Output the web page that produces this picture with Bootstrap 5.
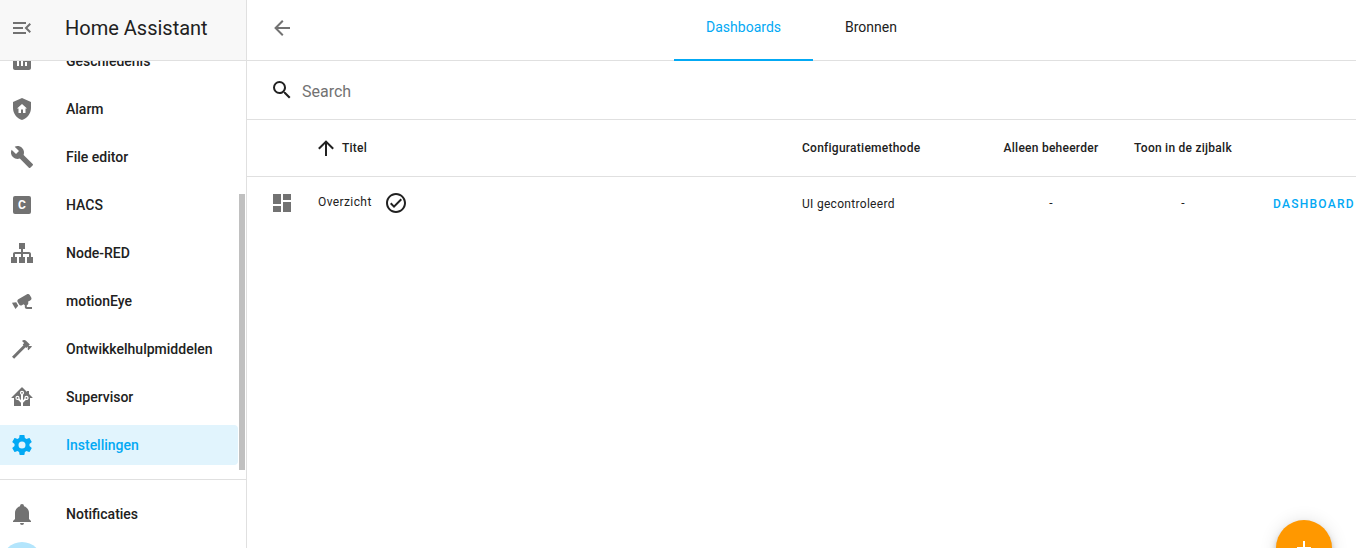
<!DOCTYPE html>
<html lang="nl">
<head>
  <meta charset="UTF-8">
  <meta name="viewport" content="width=device-width, initial-scale=1">
  <title>Dashboards</title>
  <link href="https://cdn.jsdelivr.net/npm/bootstrap@5.3.0/dist/css/bootstrap.min.css" rel="stylesheet">
  <script src="https://cdn.jsdelivr.net/npm/bootstrap@5.3.0/dist/js/bootstrap.bundle.min.js"></script>
  <style>
    html, body { height: 100%; overflow: hidden; }
    body { font-family: Roboto, "Liberation Sans", sans-serif; color: #212121; background: #fff; }
    svg { display: block; fill: currentColor; flex: none; }

    .shell { height: 548px; overflow: hidden; }
    .side { width: 247px; flex: none; border-right: 1px solid #e0e0e0; }
    .side-head { height: 61px; flex: none; padding: 0 0 4px 10px; gap: 31px; background: #f8f8f8; border-bottom: 1px solid #e0e0e0; color: #727272; position: relative; z-index: 2; }
    .side-head span { font-size: 20px; color: #212121; }
    .side-scroll { height: 418px; flex: none; overflow: hidden; position: relative; }
    .side-list { margin-top: -20px; }
    .side-item { height: 40px; width: 238px; margin-bottom: 8px; padding-left: 10px; gap: 32px; font-size: 14px; font-weight: 500; color: #727272; border-radius: 0 4px 4px 0; }
    .side-item span { color: #212121; }
    .side-item.sel { background: #e1f4fd; color: #03a9f4; }
    .side-item.sel span { color: #03a9f4; }
    .hacs-box { width: 18px; height: 18px; margin: 0 3px; background: #727272; border-radius: 2px; font-size: 12px; font-weight: 700; line-height: 18px; text-align: center; }
    .side-item span.hacs-box { color: #fff; }
    .thumb { position: absolute; left: 239px; top: 133px; width: 6px; height: 276px; background: #c0c0c0; }
    .side-foot { border-top: 1px solid #e0e0e0; padding-top: 14px; }
    .avatar { width: 40px; height: 40px; margin-left: 2px; border-radius: 50%; background: #b3e5fc; }

    .top-bar { height: 61px; flex: none; display: grid; grid-template-columns: 1fr auto 1fr; border-bottom: 1px solid #e0e0e0; }
    .back-btn { padding: 0 0 4px 23px; color: #727272; }
    .tab-item { height: 61px; padding: 0 32px 6px; margin-bottom: -1px; font-size: 14px; color: #212121; }
    .tab-item.on { color: #03a9f4; border-bottom: 2px solid #03a9f4; padding-bottom: 4px; }
    .search-row { height: 59px; flex: none; padding-left: 23px; gap: 8px; border-bottom: 1px solid #e0e0e0; font-size: 16px; color: #727272; }
    .search-row svg { color: #212121; }
    .search-row span { padding-top: 3px; }
    .data-row { display: grid; grid-template-columns: 71px 484px 183px 132px 132px 107px; align-items: center; font-size: 12px; letter-spacing: .25px; }
    .data-head { height: 57px; flex: none; border-bottom: 1px solid #e0e0e0; font-weight: 500; }
    .data-body { height: 52px; }
    .title-cell { gap: 8px; }
    .row-icon { margin-left: 23px; color: #727272; }
    .title-text { padding-bottom: 3px; margin-right: 4px; letter-spacing: .4px; }
    .conf-text { padding-top: 1px; letter-spacing: .3px; }
    .dash-btn { padding: 1px 0 0 24px; color: #03a9f4; font-weight: 500; letter-spacing: 1.25px; white-space: nowrap; }
    .fab { position: absolute; left: 1276px; top: 520px; width: 56px; height: 56px; padding-top: 16px; background: #ff9800; color: #fff; box-shadow: 0 3px 5px -1px rgba(0,0,0,.2), 0 6px 10px rgba(0,0,0,.14), 0 1px 18px rgba(0,0,0,.12); }
  </style>
</head>
<body>
  <div class="shell d-flex">

    <aside class="side d-flex flex-column">
      <div class="side-head d-flex align-items-center">
        <svg width="24" height="24" viewBox="0 0 24 24"><path d="M21,15.61L19.59,17L14.58,12L19.59,7L21,8.39L17.44,12L21,15.61M3,6H16V8H3V6M3,13V11H13V13H3M3,18V16H16V18H3Z"/></svg>
        <span>Home Assistant</span>
      </div>
      <div class="side-scroll">
        <div class="side-list">
          <div class="side-item d-flex align-items-center">
            <svg width="24" height="24" viewBox="0 0 24 24"><path fill-rule="evenodd" d="M9 17H7V10H9V17M13 17H11V7H13V17M17 17H15V13H17V17M19 3H5C3.9 3 3 3.9 3 5V19C3 20.1 3.9 21 5 21H19C20.1 21 21 20.1 21 19V5C21 3.9 20.1 3 19 3Z"/></svg>
            <span>Geschiedenis</span>
          </div>
          <div class="side-item d-flex align-items-center">
            <svg width="24" height="24" viewBox="0 0 24 24"><path fill-rule="evenodd" d="M12 1L3 5V11C3 16.5 6.8 21.7 12 23C17.2 21.7 21 16.5 21 11V5L12 1M12 7L17 11.5H15.5V16H13V12.5H11V16H8.5V11.5H7L12 7Z"/></svg>
            <span>Alarm</span>
          </div>
          <div class="side-item d-flex align-items-center">
            <svg width="24" height="24" viewBox="0 0 24 24"><path d="M22.7,19L13.6,9.9C14.5,7.6 14,4.9 12.1,3C10.1,1 7.1,0.6 4.7,1.7L9,6L6,9L1.6,4.7C0.4,7.1 0.9,10.1 2.9,12.1C4.8,14 7.5,14.5 9.8,13.6L18.9,22.7C19.3,23.1 19.9,23.1 20.3,22.7L22.6,20.4C23.1,20 23.1,19.3 22.7,19Z"/></svg>
            <span>File editor</span>
          </div>
          <div class="side-item d-flex align-items-center">
            <span class="hacs-box">C</span>
            <span>HACS</span>
          </div>
          <div class="side-item d-flex align-items-center">
            <svg width="24" height="24" viewBox="0 0 24 24"><path d="M9,2V8H11V11H5C3.89,11 3,11.89 3,13V16H1V22H7V16H5V13H11V16H9V22H15V16H13V13H19V16H17V22H23V16H21V13C21,11.89 20.11,11 19,11H13V8H15V2H9Z"/></svg>
            <span>Node-RED</span>
          </div>
          <div class="side-item d-flex align-items-center">
            <svg width="24" height="24" viewBox="0 0 24 24"><path d="M18.15,4.94C17.77,4.91 17.37,5 17,5.2L8.35,10.2C7.39,10.76 7.07,12 7.62,12.94L9.12,15.53C9.67,16.5 10.89,16.82 11.85,16.27L13.65,15.23C13.92,15.69 14.32,16.06 14.81,16.27V18.04C14.81,19.13 15.7,20 16.81,20H22V18.04H16.81V16.27C17.72,15.87 18.31,14.97 18.31,14C18.31,13.54 18.19,13.11 17.97,12.73L20.5,11.27C21.46,10.71 21.79,9.5 21.23,8.53L19.73,5.94C19.36,5.3 18.77,5 18.15,4.94M6.22,13.17L2,13.87L2.75,15.17L4.75,18.63L5.5,19.93L8.22,16.63L6.22,13.17Z"/></svg>
            <span>motionEye</span>
          </div>
          <div class="side-item d-flex align-items-center">
            <svg width="24" height="24" viewBox="0 0 24 24"><path d="M2 19.63L13.43 8.2L12.72 7.5L14.14 6.07L12 3.89C13.2 2.7 15.09 2.7 16.27 3.89L19.87 7.5L18.45 8.91H21.29L22 9.62L18.45 13.21L17.74 12.5V9.62L16.27 11.04L15.56 10.33L4.13 21.76L2 19.63Z"/></svg>
            <span>Ontwikkelhulpmiddelen</span>
          </div>
          <div class="side-item d-flex align-items-center">
            <svg width="24" height="24" viewBox="0 0 24 24"><path fill-rule="evenodd" d="M21.8,13H20V21H13V17.67L15.79,14.88L16.5,15C17.66,15 18.6,14.06 18.6,12.9C18.6,11.74 17.66,10.8 16.5,10.8A2.1,2.1 0 0,0 14.4,12.9L14.5,13.61L13,15.13V9.65C13.66,9.29 14.1,8.6 14.1,7.8A2.1,2.1 0 0,0 12,5.7A2.1,2.1 0 0,0 9.9,7.8C9.9,8.6 10.34,9.29 11,9.65V15.13L9.5,13.61L9.6,12.9A2.1,2.1 0 0,0 7.5,10.8A2.1,2.1 0 0,0 5.4,12.9A2.1,2.1 0 0,0 7.5,15L8.21,14.88L11,17.67V21H4V13H2.25C1.83,13 1.42,13 1.42,12.79C1.43,12.57 1.85,12.15 2.28,11.72L11,3C11.33,2.67 11.67,2.33 12,2.33C12.33,2.33 12.67,2.67 13,3L17,7V6H19V9L21.78,11.78C22.18,12.18 22.59,12.59 22.6,12.8C22.6,13 22.2,13 21.8,13M7.5,12A0.9,0.9 0 0,1 8.4,12.9A0.9,0.9 0 0,1 7.5,13.8A0.9,0.9 0 0,1 6.6,12.9A0.9,0.9 0 0,1 7.5,12M16.5,12C17,12 17.4,12.4 17.4,12.9C17.4,13.4 17,13.8 16.5,13.8A0.9,0.9 0 0,1 15.6,12.9A0.9,0.9 0 0,1 16.5,12M12,6.9C12.5,6.9 12.9,7.3 12.9,7.8C12.9,8.3 12.5,8.7 12,8.7C11.5,8.7 11.1,8.3 11.1,7.8C11.1,7.3 11.5,6.9 12,6.9Z"/></svg>
            <span>Supervisor</span>
          </div>
          <div class="side-item sel d-flex align-items-center">
            <svg width="24" height="24" viewBox="0 0 24 24"><path d="M12,15.5A3.5,3.5 0 0,1 8.5,12A3.5,3.5 0 0,1 12,8.5A3.5,3.5 0 0,1 15.5,12A3.5,3.5 0 0,1 12,15.5M19.43,12.97C19.47,12.65 19.5,12.33 19.5,12C19.5,11.67 19.47,11.34 19.43,11L21.54,9.37C21.73,9.22 21.78,8.95 21.66,8.73L19.66,5.27C19.54,5.05 19.27,4.96 19.05,5.05L16.56,6.05C16.04,5.66 15.5,5.32 14.87,5.07L14.5,2.42C14.46,2.18 14.25,2 14,2H10C9.75,2 9.54,2.18 9.5,2.42L9.13,5.07C8.5,5.32 7.96,5.66 7.44,6.05L4.95,5.05C4.73,4.96 4.46,5.05 4.34,5.27L2.34,8.73C2.21,8.95 2.27,9.22 2.46,9.37L4.57,11C4.53,11.34 4.5,11.67 4.5,12C4.5,12.33 4.53,12.65 4.57,12.97L2.46,14.63C2.27,14.78 2.21,15.05 2.34,15.27L4.34,18.73C4.46,18.95 4.73,19.03 4.95,18.95L7.44,17.94C7.96,18.34 8.5,18.68 9.13,18.93L9.5,21.58C9.54,21.82 9.75,22 10,22H14C14.25,22 14.46,21.82 14.5,21.58L14.87,18.93C15.5,18.67 16.04,18.34 16.56,17.94L19.05,18.95C19.27,19.03 19.54,18.95 19.66,18.73L21.66,15.27C21.78,15.05 21.73,14.78 21.54,14.63L19.43,12.97Z"/></svg>
            <span>Instellingen</span>
          </div>
        </div>
        <div class="thumb"></div>
      </div>
      <div class="side-foot">
        <div class="side-item d-flex align-items-center">
          <svg width="24" height="24" viewBox="0 0 24 24"><path d="M21,19V20H3V19L5,17V11C5,7.9 7.03,5.17 10,4.29C10,4.19 10,4.1 10,4A2,2 0 0,1 12,2A2,2 0 0,1 14,4C14,4.1 14,4.19 14,4.29C16.97,5.17 19,7.9 19,11V17L21,19M14,21A2,2 0 0,1 12,23A2,2 0 0,1 10,21"/></svg>
          <span>Notificaties</span>
        </div>
        <div class="avatar"></div>
      </div>
    </aside>

    <main class="flex-grow-1 d-flex flex-column">
      <div class="top-bar">
        <div class="back-btn d-flex align-items-center">
          <svg width="24" height="24" viewBox="0 0 24 24"><path d="M20,11V13H8L13.5,18.5L12.08,19.92L4.16,12L12.08,4.08L13.5,5.5L8,11H20Z"/></svg>
        </div>
        <div class="d-flex">
          <div class="tab-item on d-flex align-items-center">Dashboards</div>
          <div class="tab-item d-flex align-items-center">Bronnen</div>
        </div>
        <div></div>
      </div>

      <div class="search-row d-flex align-items-center">
        <svg width="24" height="24" viewBox="0 0 24 24"><path d="M9.5,3A6.5,6.5 0 0,1 16,9.5C16,11.11 15.41,12.59 14.44,13.73L14.71,14H15.5L20.5,19L19,20.5L14,15.5V14.71L13.73,14.44C12.59,15.41 11.11,16 9.5,16A6.5,6.5 0 0,1 3,9.5A6.5,6.5 0 0,1 9.5,3M9.5,5C7,5 5,7 5,9.5C5,12 7,14 9.5,14C12,14 14,12 14,9.5C14,7 12,5 9.5,5Z"/></svg>
        <span>Search</span>
      </div>

      <div class="data-row data-head">
        <div></div>
        <div class="title-cell d-flex align-items-center">
          <svg width="16" height="16" viewBox="4 4 16 16"><path d="M13,20H11V8L5.5,13.5L4.08,12.08L12,4.16L19.92,12.08L18.5,13.5L13,8V20Z"/></svg>
          <span>Titel</span>
        </div>
        <div>Configuratiemethode</div>
        <div class="text-center">Alleen beheerder</div>
        <div class="text-center">Toon in de zijbalk</div>
        <div></div>
      </div>

      <div class="data-row data-body">
        <div class="row-icon">
          <svg width="24" height="24" viewBox="0 0 24 24"><path d="M13,3V9H21V3M13,21H21V11H13M3,21H11V15H3M3,13H11V3H3V13Z"/></svg>
        </div>
        <div class="title-cell d-flex align-items-center">
          <span class="title-text">Overzicht</span>
          <svg width="24" height="24" viewBox="0 0 24 24"><path d="M12 2C6.5 2 2 6.5 2 12S6.5 22 12 22 22 17.5 22 12 17.5 2 12 2M12 20C7.59 20 4 16.41 4 12S7.59 4 12 4 20 7.59 20 12 16.41 20 12 20M16.59 7.58L10 14.17L7.41 11.59L6 13L10 17L18 9L16.59 7.58Z"/></svg>
        </div>
        <div class="conf-text">UI gecontroleerd</div>
        <div class="text-center">-</div>
        <div class="text-center">-</div>
        <div class="dash-btn">DASHBOARD</div>
      </div>
    </main>
  </div>

  <div class="fab rounded-circle d-flex justify-content-center">
    <svg width="24" height="24" viewBox="0 0 24 24"><path d="M19,13H13V19H11V13H5V11H11V5H13V11H19V13Z"/></svg>
  </div>
</body>
</html>
